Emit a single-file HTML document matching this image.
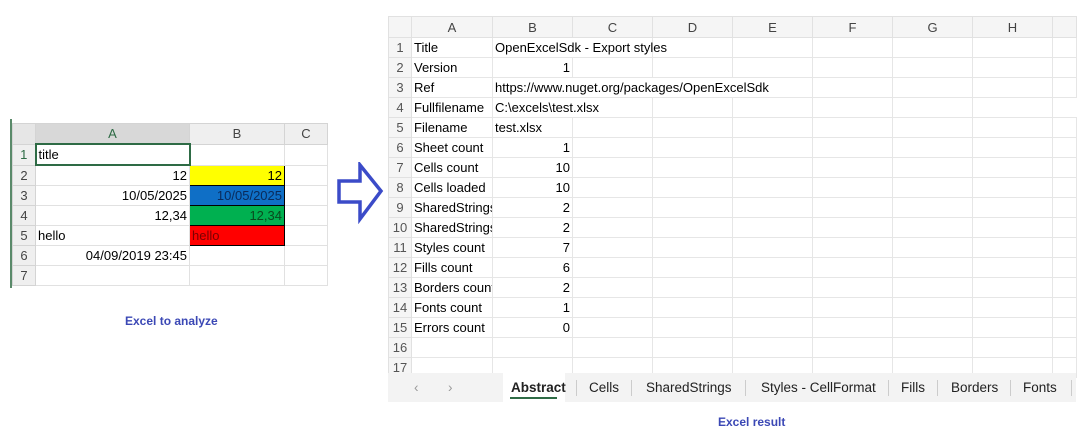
<!DOCTYPE html>
<html><head><meta charset="utf-8"><style>
body{margin:0;width:1085px;height:438px;background:#fff;position:relative;overflow:hidden;font-family:"Liberation Sans",sans-serif;}
table{border-collapse:collapse;table-layout:fixed;position:absolute;}
td{height:19px;padding:0 2px;font-size:13px;white-space:nowrap;overflow:hidden;border:1px solid #e1e1e1;color:#000;}
.L td.h{background:#efefef;color:#444;text-align:center;border-color:#d4d4d4}
.L td.rn{background:#efefef;color:#444;text-align:center;border-color:#d4d4d4}
.R td{border-color:#e6e6e6}
.R td.h{background:#f5f5f5;color:#444;text-align:center;border-color:#e1e1e1}
.R td.rn{background:#f5f5f5;color:#555;text-align:center;border-color:#e1e1e1;padding:0}
.r{text-align:right}
.cap{position:absolute;color:#3b48b5;font-weight:bold;font-size:12px}
.tabs{position:absolute;left:388px;top:373px;width:688px;height:29px;background:#f3f3f3;font-size:13.5px;color:#222}
.tabs span{position:absolute;top:7px}
.sep{position:absolute;top:7px;width:1px;height:16px;background:#ccc}
</style></head><body>
<div style="position:absolute;left:10px;top:119px;width:2px;height:169px;background:#5a8a6a"></div>
<table class="L" style="left:12px;top:123px;width:315px">
<colgroup><col style="width:23px"><col style="width:154px"><col style="width:95px"><col style="width:43px"></colgroup>
<tr><td class="h" style="background:#e6e6e6"></td><td class="h" style="background:#d8d8d8;color:#2e6b45;border-bottom:2px solid #2e6b45">A</td><td class="h">B</td><td class="h">C</td></tr>
<tr><td class="rn" style="color:#2e6b45">1</td><td style="border:2px solid #2e6b45">title</td><td></td><td></td></tr>
<tr><td class="rn">2</td><td class="r">12</td><td class="r" style="background:#ffff00;border:1px solid #000">12</td><td></td></tr>
<tr><td class="rn">3</td><td class="r">10/05/2025</td><td class="r" style="background:#0f6fc6;border:1px solid #000;color:#0a2a5a">10/05/2025</td><td></td></tr>
<tr><td class="rn">4</td><td class="r">12,34</td><td class="r" style="background:#00b050;border:1px solid #000;color:#0a4a1e">12,34</td><td></td></tr>
<tr><td class="rn">5</td><td>hello</td><td style="background:#ff0000;border:1px solid #000;color:#7a0000">hello</td><td></td></tr>
<tr><td class="rn">6</td><td class="r">04/09/2019 23:45</td><td></td><td></td></tr>
<tr><td class="rn">7</td><td></td><td></td><td></td></tr>
</table>
<div class="cap" style="left:125px;top:314px">Excel to analyze</div>
<svg style="position:absolute;left:336px;top:162px" width="50" height="62"><path d="M3 19 H24 V3 L45 29 L24 57 V40 H3 Z" fill="none" stroke="#3b4bc8" stroke-width="3.5" stroke-linejoin="miter"/></svg>
<table class="R" style="left:388px;top:16px;width:688px">
<colgroup><col style="width:23px"><col style="width:81px"><col style="width:80px"><col style="width:80px"><col style="width:80px"><col style="width:80px"><col style="width:80px"><col style="width:80px"><col style="width:80px"><col style="width:24px"></colgroup>
<tr><td class="h" style="height:20px"></td><td class="h">A</td><td class="h">B</td><td class="h">C</td><td class="h">D</td><td class="h">E</td><td class="h">F</td><td class="h">G</td><td class="h">H</td><td class="h"></td></tr>
<tr><td class="rn">1</td><td>Title</td><td colspan="2" style="overflow:visible">OpenExcelSdk - Export styles</td><td></td><td></td><td></td><td></td><td></td><td></td></tr>
<tr><td class="rn">2</td><td>Version</td><td class="r">1</td><td></td><td></td><td></td><td></td><td></td><td></td><td></td></tr>
<tr><td class="rn">3</td><td>Ref</td><td colspan="4">https://www.nuget.org/packages/OpenExcelSdk</td><td></td><td></td><td></td><td></td></tr>
<tr><td class="rn">4</td><td style="overflow:visible">Fullfilename</td><td colspan="2">C:\excels\test.xlsx</td><td></td><td></td><td></td><td></td><td></td></tr>
<tr><td class="rn">5</td><td>Filename</td><td>test.xlsx</td><td></td><td></td><td></td><td></td><td></td><td></td><td></td></tr>
<tr><td class="rn">6</td><td>Sheet count</td><td class="r">1</td><td></td><td></td><td></td><td></td><td></td><td></td><td></td></tr>
<tr><td class="rn">7</td><td>Cells count</td><td class="r">10</td><td></td><td></td><td></td><td></td><td></td><td></td><td></td></tr>
<tr><td class="rn">8</td><td>Cells loaded</td><td class="r">10</td><td></td><td></td><td></td><td></td><td></td><td></td><td></td></tr>
<tr><td class="rn">9</td><td>SharedStrings</td><td class="r">2</td><td></td><td></td><td></td><td></td><td></td><td></td><td></td></tr>
<tr><td class="rn">10</td><td>SharedStrings</td><td class="r">2</td><td></td><td></td><td></td><td></td><td></td><td></td><td></td></tr>
<tr><td class="rn">11</td><td>Styles count</td><td class="r">7</td><td></td><td></td><td></td><td></td><td></td><td></td><td></td></tr>
<tr><td class="rn">12</td><td>Fills count</td><td class="r">6</td><td></td><td></td><td></td><td></td><td></td><td></td><td></td></tr>
<tr><td class="rn">13</td><td>Borders count</td><td class="r">2</td><td></td><td></td><td></td><td></td><td></td><td></td><td></td></tr>
<tr><td class="rn">14</td><td>Fonts count</td><td class="r">1</td><td></td><td></td><td></td><td></td><td></td><td></td><td></td></tr>
<tr><td class="rn">15</td><td>Errors count</td><td class="r">0</td><td></td><td></td><td></td><td></td><td></td><td></td><td></td></tr>
<tr><td class="rn">16</td><td></td><td></td><td></td><td></td><td></td><td></td><td></td><td></td><td></td></tr>
<tr><td class="rn">17</td><td></td><td></td><td></td><td></td><td></td><td></td><td></td><td></td><td></td></tr>
</table>
<div class="tabs">
<span style="left:26px;color:#999">&#8249;</span><span style="left:60px;color:#999">&#8250;</span>
<div style="position:absolute;left:115px;top:0;width:62px;height:29px;background:#fff"></div>
<span style="left:123px;font-weight:bold">Abstract</span>
<div style="position:absolute;left:122px;top:24px;width:47px;height:2px;background:#2e6b45"></div>
<div class="sep" style="left:188px"></div><span style="left:201px">Cells</span>
<div class="sep" style="left:243px"></div><span style="left:258px">SharedStrings</span>
<div class="sep" style="left:357px"></div><span style="left:373px">Styles - CellFormat</span>
<div class="sep" style="left:500px"></div><span style="left:513px">Fills</span>
<div class="sep" style="left:549px"></div><span style="left:563px">Borders</span>
<div class="sep" style="left:622px"></div><span style="left:635px">Fonts</span>
<div class="sep" style="left:683px"></div>
</div>
<div class="cap" style="left:718px;top:415px">Excel result</div>
</body></html>
